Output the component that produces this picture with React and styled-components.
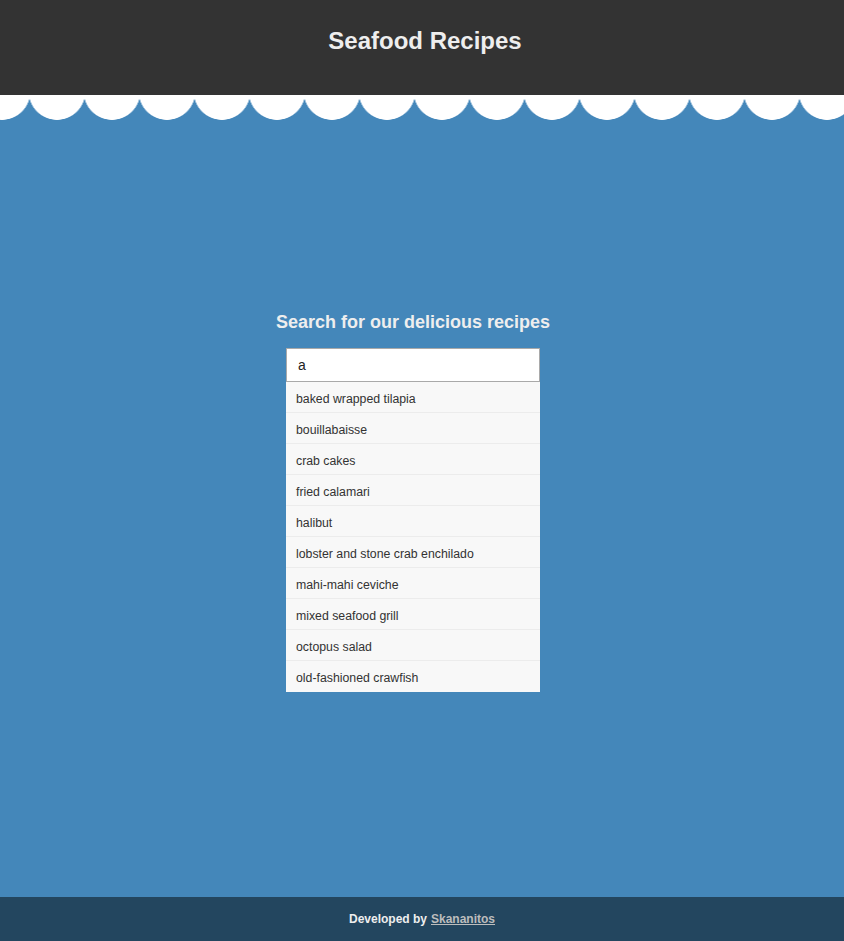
import React from "react";
import styled, { createGlobalStyle } from "styled-components";

const Global = createGlobalStyle`
  html, body { margin: 0; padding: 0; }
  body { font-family: "Liberation Sans", Arial, sans-serif; background: #4487ba; }
  * { box-sizing: border-box; }
`;

const Page = styled.div`
  display: flex;
  flex-direction: column;
  min-height: 941px;
  background: #4487ba;
`;

const Header = styled.header`
  height: 95px;
  background: #333333;
  padding: 27px 0 0 6px;
  text-align: center;
`;

const Title = styled.h1`
  margin: 0;
  font-size: 24px;
  line-height: 28px;
  font-weight: 700;
  color: #eeeeee;
`;

const Scallops = styled.div`
  height: 26px;
  background-color: #4487ba;
  background-image: radial-gradient(circle 28.5px at 27.5px -3.5px, #ffffff 28px, transparent 28.6px);
  background-size: 55px 26px;
  background-position: -25.5px 0;
  background-repeat: repeat-x;
`;

const Main = styled.main`
  flex: 1;
  display: flex;
  flex-direction: column;
  align-items: center;
  padding: 190px 18px 0 0;
`;

const Heading = styled.h2`
  margin: 0 0 15px;
  font-size: 18px;
  line-height: 22px;
  font-weight: 700;
  color: #eeeeee;
`;

const Search = styled.div`
  width: 254px;
  display: flex;
  flex-direction: column;
`;

const Input = styled.input`
  width: 254px;
  height: 34px;
  border: 1px solid #a9a9a9;
  background: #ffffff;
  padding: 0 10px 0 11px;
  font-family: "Liberation Sans", Arial, sans-serif;
  font-size: 14px;
  color: #222;
  outline: none;
  caret-color: #000;
`;

const List = styled.ul`
  list-style: none;
  margin: 0;
  padding: 0;
  background: #f8f8f8;
`;

const Item = styled.li`
  height: 31px;
  padding: 4px 10px 0;
  line-height: 26px;
  font-size: 12.3px;
  color: #333333;
  border-bottom: ${(p) => (p.$last ? "none" : "1px solid #ececec")};
`;

const Footer = styled.footer`
  height: 44px;
  background: #23465f;
  display: flex;
  align-items: center;
  justify-content: center;
  font-size: 12px;
  font-weight: 700;
  color: #eeeeee;
`;

const Link = styled.a`
  color: #bdbdbd;
  text-decoration: underline;
  margin-left: 4px;
`;

const recipes = [
  "baked wrapped tilapia",
  "bouillabaisse",
  "crab cakes",
  "fried calamari",
  "halibut",
  "lobster and stone crab enchilado",
  "mahi-mahi ceviche",
  "mixed seafood grill",
  "octopus salad",
  "old-fashioned crawfish",
];

export default function App() {
  return (
    <Page>
      <Global />
      <Header>
        <Title>Seafood Recipes</Title>
      </Header>
      <Scallops />
      <Main>
        <Heading>Search for our delicious recipes</Heading>
        <Search>
          <Input defaultValue="a" autoFocus />
          <List>
            {recipes.map((r, i) => (
              <Item key={r} $last={i === recipes.length - 1}>
                {r}
              </Item>
            ))}
          </List>
        </Search>
      </Main>
      <Footer>
        Developed by<Link href="#">Skananitos</Link>
      </Footer>
    </Page>
  );
}
